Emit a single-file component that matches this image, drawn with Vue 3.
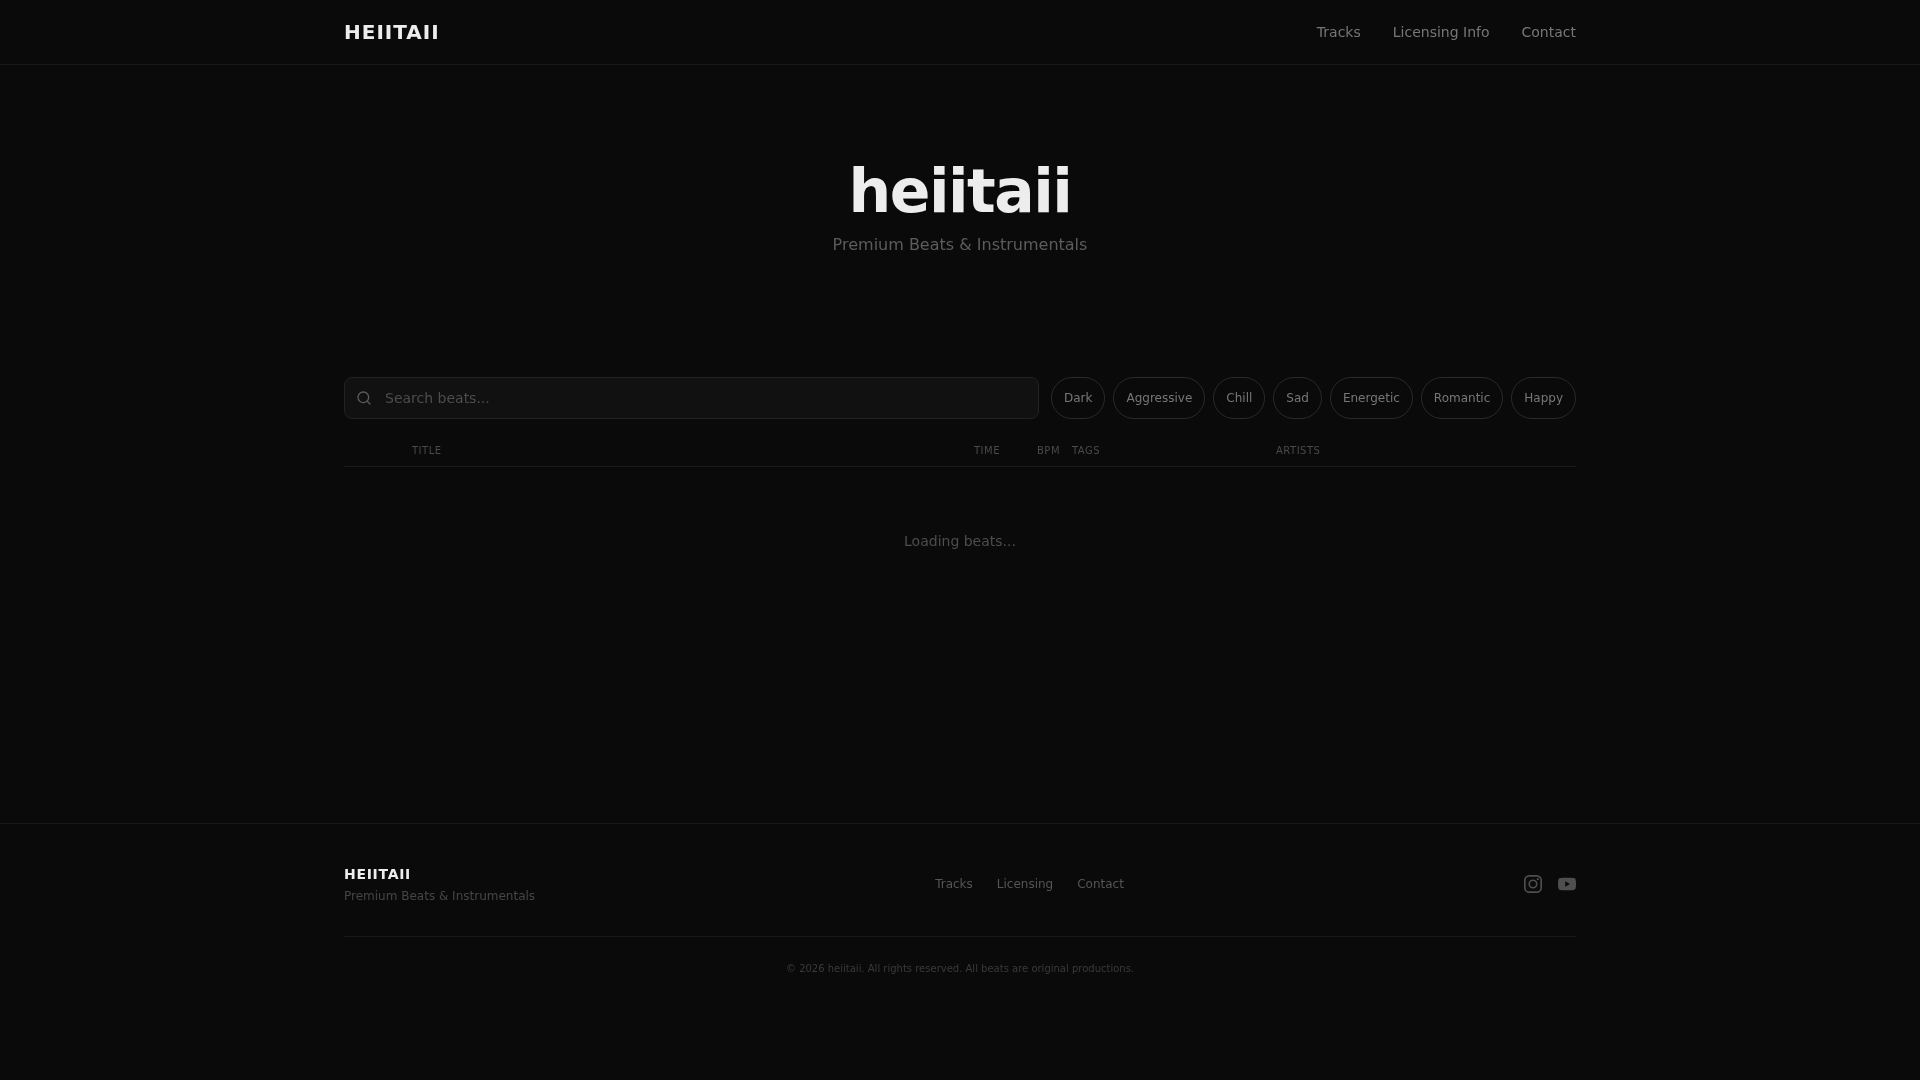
<template>
  <div class="page">
    <header class="site-header">
      <div class="container header-row">
        <a class="logo">HEIITAII</a>
        <nav class="main-nav">
          <a v-for="link in navLinks" :key="link">{{ link }}</a>
        </nav>
      </div>
    </header>

    <section class="hero">
      <h1>heiitaii</h1>
      <p>Premium Beats &amp; Instrumentals</p>
    </section>

    <main class="container beats">
      <div class="filters">
        <label class="search">
          <svg viewBox="0 0 24 24" width="16" height="16" fill="none" stroke="currentColor" stroke-width="2" stroke-linecap="round" stroke-linejoin="round">
            <circle cx="11" cy="11" r="8" />
            <path d="m21 21-4.3-4.3" />
          </svg>
          <input type="text" placeholder="Search beats..." />
        </label>
        <button v-for="tag in tags" :key="tag" class="chip">{{ tag }}</button>
      </div>

      <div class="table-head">
        <span></span>
        <span>Title</span>
        <span>Time</span>
        <span>BPM</span>
        <span>Tags</span>
        <span>Artists</span>
      </div>

      <p class="loading">Loading beats...</p>
    </main>

    <footer class="site-footer">
      <div class="container">
        <div class="footer-row">
          <div>
            <div class="footer-logo">HEIITAII</div>
            <div class="footer-sub">Premium Beats &amp; Instrumentals</div>
          </div>
          <nav class="footer-nav">
            <a v-for="link in footerLinks" :key="link">{{ link }}</a>
          </nav>
          <div class="socials">
            <svg viewBox="0 0 24 24" width="18" height="18" fill="none" stroke="currentColor" stroke-width="2.2">
              <rect x="1.1" y="1.1" width="21.8" height="21.8" rx="6" />
              <circle cx="12" cy="12" r="5" />
              <circle cx="18.4" cy="5.6" r="1.44" fill="currentColor" stroke="none" />
            </svg>
            <svg viewBox="0 0 24 24" width="18" height="18" fill="currentColor">
              <path d="M23.5 6.2a3 3 0 0 0-2.1-2.1C19.5 3.6 12 3.6 12 3.6s-7.5 0-9.4.5A3 3 0 0 0 .5 6.2 31 31 0 0 0 0 12a31 31 0 0 0 .5 5.8 3 3 0 0 0 2.1 2.1c1.9.5 9.4.5 9.4.5s7.5 0 9.4-.5a3 3 0 0 0 2.1-2.1A31 31 0 0 0 24 12a31 31 0 0 0-.5-5.8ZM9.6 15.6V8.4l6.3 3.6-6.3 3.6Z" />
            </svg>
          </div>
        </div>
        <p class="copyright">© 2026 heiitaii. All rights reserved. All beats are original productions.</p>
      </div>
    </footer>
  </div>
</template>

<script setup>
const navLinks = ['Tracks', 'Licensing Info', 'Contact']
const footerLinks = ['Tracks', 'Licensing', 'Contact']
const tags = ['Dark', 'Aggressive', 'Chill', 'Sad', 'Energetic', 'Romantic', 'Happy']
</script>

<style>
body {
  background: #0a0a0a;
}
</style>

<style scoped>
.page {
  min-height: 1080px;
  color: #777;
  font-family: "DejaVu Sans", sans-serif;
  will-change: transform;
}

.container {
  width: 1232px;
  margin: 0 auto;
}

.site-header {
  border-bottom: 1px solid #1a1a1a;
}

.header-row {
  display: flex;
  justify-content: space-between;
  align-items: center;
  height: 64px;
}

.logo {
  font-size: 20px;
  font-weight: 700;
  letter-spacing: 1px;
  color: #ededed;
}

.main-nav {
  display: flex;
  gap: 32px;
  font-size: 14px;
}

.hero {
  height: 312px;
  padding-top: 96px;
  box-sizing: border-box;
  text-align: center;
}

.hero h1 {
  margin: 0;
  font-size: 60px;
  line-height: 60px;
  font-weight: 700;
  letter-spacing: -1.5px;
  color: #ededed;
}

.hero p {
  margin: 12px 0 0;
  font-size: 16px;
  line-height: 24px;
  color: #5c5c5c;
}

.filters {
  display: flex;
  gap: 8px;
  height: 42px;
}

.search {
  flex: 1;
  display: flex;
  align-items: center;
  gap: 13px;
  margin-right: 4px;
  padding: 0 11px;
  background: #111;
  border: 1px solid #222;
  border-radius: 8px;
  color: #5c5c5c;
}

.search input {
  flex: 1;
  min-width: 0;
  padding: 0;
  background: none;
  border: none;
  outline: none;
  font: inherit;
  font-size: 14px;
  color: #ccc;
}

.search input::placeholder {
  color: #4d4d4d;
}

.chip {
  padding: 0 12px;
  background: none;
  border: 1px solid #2a2a2a;
  border-radius: 21px;
  font: inherit;
  font-size: 12px;
  color: #777;
}

.table-head {
  display: grid;
  grid-template-columns: 68px 562px 63px 35px 204px 1fr;
  align-items: center;
  height: 32px;
  margin-top: 16px;
  box-sizing: border-box;
  border-bottom: 1px solid #1a1a1a;
  font-size: 10px;
  letter-spacing: 0.5px;
  text-transform: uppercase;
  color: #4a4a4a;
}

.loading {
  height: 356px;
  margin: 0;
  padding-top: 64px;
  box-sizing: border-box;
  text-align: center;
  font-size: 14px;
  line-height: 21px;
  color: #4d4d4d;
}

.site-footer {
  border-top: 1px solid #1a1a1a;
  padding-top: 40px;
}

.footer-row {
  display: flex;
  justify-content: space-between;
  align-items: center;
  padding-bottom: 31px;
  border-bottom: 1px solid #1a1a1a;
}

.footer-logo {
  font-size: 14px;
  line-height: 20px;
  font-weight: 700;
  letter-spacing: 0.7px;
  color: #ededed;
}

.footer-sub {
  margin-top: 3px;
  font-size: 12px;
  line-height: 18px;
  color: #464646;
}

.footer-nav {
  display: flex;
  gap: 24px;
  margin-bottom: 1px;
  font-size: 12px;
  color: #555;
}

.socials {
  display: flex;
  gap: 16px;
  margin-bottom: 1px;
  color: #4f4f4f;
}

.copyright {
  margin: 24px 0 0;
  text-align: center;
  font-size: 10px;
  line-height: 15px;
  color: #3a3a3a;
}
</style>
